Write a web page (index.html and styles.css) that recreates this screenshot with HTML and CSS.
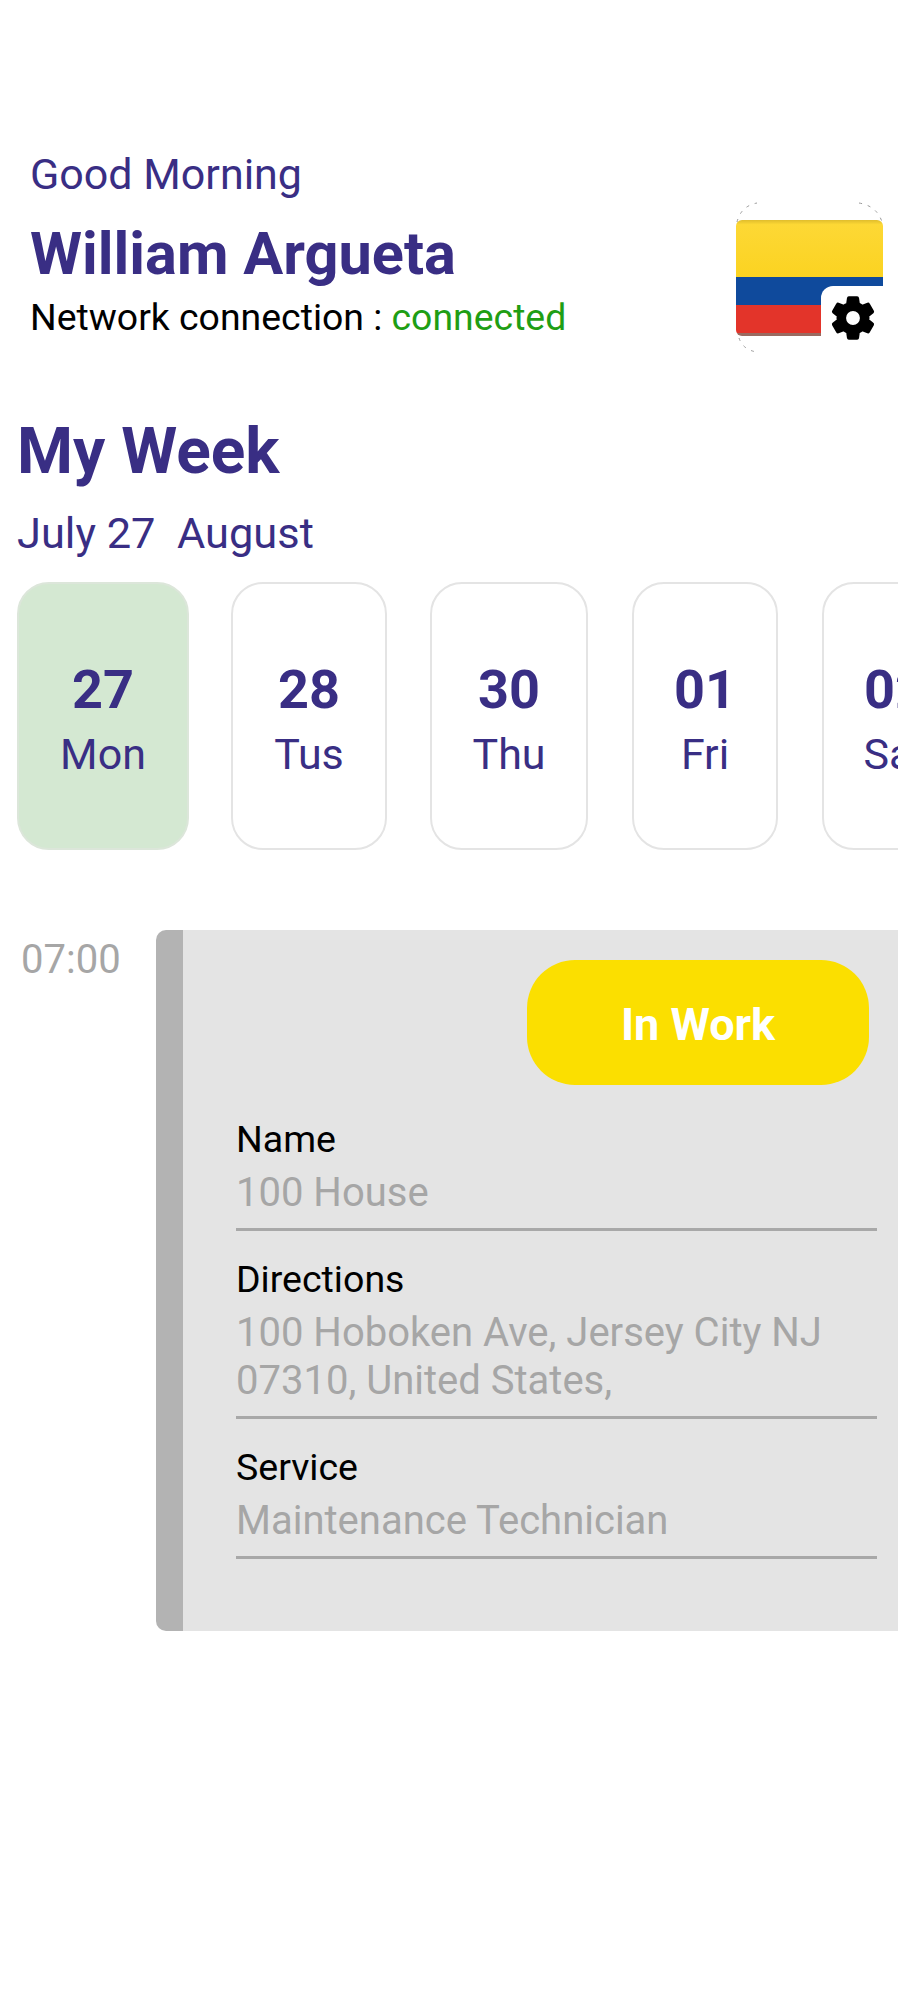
FILE: index.html
```html
<!DOCTYPE html>
<html lang="en">
<head>
    <meta charset="UTF-8">
    <meta name="viewport" content="width=device-width, initial-scale=1.0">
    <title>My Week</title>
    <link rel="stylesheet" href="styles.css">
</head>
<body>
    <div class="container">
        <div class="header">
            <div class="user">
                <div class="greeting">Good Morning</div>
                <div class="user-name">William Argueta</div>
                <div class="network">Network connection : <span class="connected">connected</span></div>
            </div>
            <svg class="flag" viewBox="0 0 150 154" width="150" height="154" role="img" aria-label="Colombia flag, settings">
                <defs>
                    <clipPath id="flagClip"><rect x="1" y="20" width="147" height="116" rx="6"/></clipPath>
                    <linearGradient id="yellowShade" x1="0" y1="0" x2="0" y2="1">
                        <stop offset="0" stop-color="#e0bd2c"/>
                        <stop offset="0.08" stop-color="#fdd835"/>
                        <stop offset="1" stop-color="#fbd321"/>
                    </linearGradient>
                </defs>
                <g clip-path="url(#flagClip)">
                    <rect x="0" y="20" width="150" height="57" fill="url(#yellowShade)"/>
                    <rect x="0" y="77" width="150" height="28" fill="#0f4a9c"/>
                    <rect x="0" y="105" width="150" height="28" fill="#e3342a"/>
                    <rect x="0" y="133" width="150" height="4" fill="#9a6a60"/>
                </g>
                <g fill="none" stroke="#9a9a9a" stroke-width="1" stroke-dasharray="3 6">
                    <path d="M2 22 Q6 6 22 3"/>
                    <path d="M124 3 Q142 6 147 22"/>
                    <path d="M4 138 Q8 150 22 152"/>
                    <path d="M128 152 Q142 150 148 134"/>
                </g>
                <path d="M86 154V98a12 12 0 0 1 12-12h52v68z" fill="#fff"/>
                <svg x="92" y="92" width="52" height="52" viewBox="0 0 24 24">
                    <path d="M19.14 12.94c.04-.3.06-.61.06-.94 0-.32-.02-.64-.07-.94l2.03-1.58c.18-.14.23-.41.12-.61l-1.92-3.32c-.12-.22-.37-.29-.59-.22l-2.39.96c-.5-.38-1.03-.7-1.62-.94l-.36-2.54c-.04-.24-.24-.41-.48-.41h-3.84c-.24 0-.43.17-.47.41l-.36 2.54c-.59.24-1.13.57-1.62.94l-2.39-.96c-.22-.08-.47 0-.59.22L2.74 8.87c-.12.21-.08.47.12.61l2.03 1.58c-.05.3-.09.63-.09.94s.02.64.07.94l-2.03 1.58c-.18.14-.23.41-.12.61l1.92 3.32c.12.22.37.29.59.22l2.39-.96c.5.38 1.03.7 1.62.94l.36 2.54c.05.24.24.41.48.41h3.84c.24 0 .44-.17.47-.41l.36-2.54c.59-.24 1.13-.56 1.62-.94l2.39.96c.22.08.47 0 .59-.22l1.92-3.32c.12-.22.07-.47-.12-.61l-2.01-1.58zM12 15.6c-1.98 0-3.6-1.62-3.6-3.6s1.62-3.6 3.6-3.6 3.6 1.62 3.6 3.6-1.62 3.6-3.6 3.6z" fill="#000" stroke="#000" stroke-width="0.8"/>
                </svg>
            </svg>
        </div>

        <h1 class="week-title">My Week</h1>
        <div class="week-range">July 27&nbsp; August</div>

        <div class="days">
            <div class="day day-active"><div class="day-num">27</div><div class="day-name">Mon</div></div>
            <div class="day day-tus"><div class="day-num">28</div><div class="day-name">Tus</div></div>
            <div class="day day-thu"><div class="day-num">30</div><div class="day-name">Thu</div></div>
            <div class="day day-fri"><div class="day-num">01</div><div class="day-name">Fri</div></div>
            <div class="day day-sat"><div class="day-num">02</div><div class="day-name">Sat</div></div>
        </div>

        <div class="schedule">
            <div class="time">07:00</div>
            <div class="job">
                <div class="job-top">
                    <div class="status">In Work</div>
                </div>
                <div class="field">
                    <div class="field-label">Name</div>
                    <div class="field-value">100 House</div>
                </div>
                <div class="field">
                    <div class="field-label">Directions</div>
                    <div class="field-value">100 Hoboken Ave, Jersey City NJ 07310, United States,</div>
                </div>
                <div class="field">
                    <div class="field-label">Service</div>
                    <div class="field-value">Maintenance Technician</div>
                </div>
            </div>
        </div>
    </div>
</body>
</html>
```

FILE: styles.css
```css
body {
    font-family: Roboto, "Liberation Sans", sans-serif;
    margin: 0;
    background-color: #fff;
    color: #392e84;
}

.container {
    width: 898px;
    min-height: 2000px;
    overflow: hidden;
    box-sizing: border-box;
    padding-top: 144px;
}

.header {
    display: flex;
    justify-content: space-between;
    align-items: flex-start;
    padding-left: 30px;
}

.greeting {
    font-size: 43px;
    line-height: 60px;
}

.user-name {
    margin-top: 20px;
    font-size: 59.5px;
    font-weight: 700;
    line-height: 60px;
}

.network {
    margin-top: 13px;
    font-size: 37.4px;
    line-height: 40px;
    color: #000;
}

.connected {
    color: #1f9e14;
}

.flag {
    display: block;
    margin-top: 56px;
    margin-right: 13px;
    flex-shrink: 0;
}

.week-title {
    margin: 63px 0 0 17px;
    font-size: 64px;
    font-weight: 700;
    line-height: 70px;
}

.week-range {
    margin: 25px 0 0 17px;
    font-size: 43.4px;
    line-height: 44px;
}

.days {
    display: flex;
    margin: 26px 0 0 17px;
    height: 268px;
}

.day {
    display: flex;
    flex-direction: column;
    align-items: center;
    justify-content: center;
    flex-shrink: 0;
    box-sizing: border-box;
    border: 2px solid #e4e4e4;
    border-radius: 32px;
    padding-top: 5px;
}

.day-active {
    width: 172px;
    background-color: #d4e8d2;
    border-color: #dce6da;
}

.day-tus { width: 156px; margin-left: 42px; }
.day-thu { width: 158px; margin-left: 43px; }
.day-fri { width: 146px; margin-left: 44px; }
.day-sat { width: 146px; margin-left: 44px; }

.day-num {
    font-size: 54px;
    font-weight: 700;
    line-height: 64px;
}

.day-name {
    font-size: 43px;
    line-height: 50px;
    margin-top: 7px;
}

.schedule {
    display: flex;
    margin-top: 80px;
}

.time {
    width: 156px;
    padding: 6px 0 0 21px;
    box-sizing: border-box;
    font-size: 40px;
    line-height: 48px;
    color: #a6a6a6;
    flex-shrink: 0;
}

.job {
    flex-grow: 1;
    height: 701px;
    box-sizing: border-box;
    padding: 30px 21px 0 53px;
    background-color: #e4e4e4;
    border-left: 27px solid #b3b3b3;
    border-radius: 10px 0 0 10px;
}

.job-top {
    display: flex;
    justify-content: flex-end;
    margin-right: 8px;
    margin-bottom: 32px;
}

.status {
    width: 342px;
    height: 125px;
    box-sizing: border-box;
    padding-top: 3px;
    display: flex;
    align-items: center;
    justify-content: center;
    border-radius: 48px;
    background-color: #fbdf00;
    color: #fff;
    font-size: 45px;
    font-weight: 700;
}

.field {
    padding-bottom: 11px;
    margin-bottom: 26px;
    border-bottom: 3px solid #a8a8a8;
}

.field-label {
    font-size: 37.5px;
    line-height: 44px;
    color: #000;
}

.field-value {
    margin-top: 8px;
    font-size: 40px;
    line-height: 48px;
    color: #a6a6a6;
}
```
